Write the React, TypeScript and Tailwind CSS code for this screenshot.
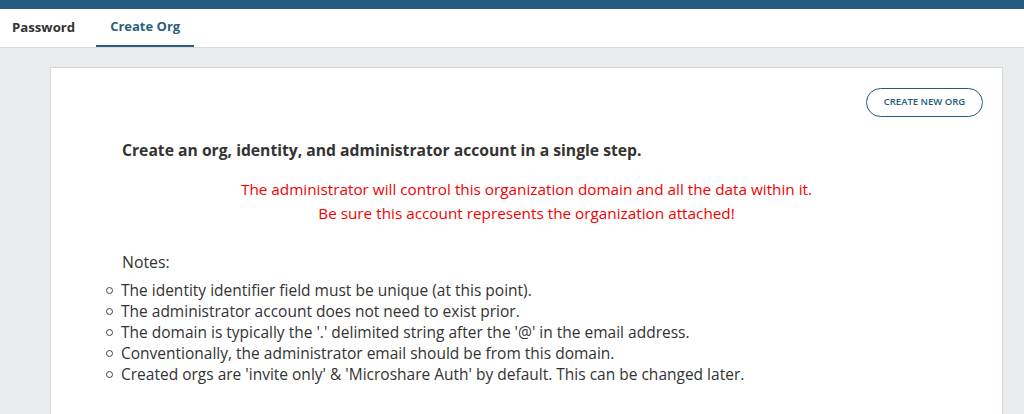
import React from 'react';

const notes = [
    "The identity identifier field must be unique (at this point).",
    "The administrator account does not need to exist prior.",
    "The domain is typically the '.' delimited string after the '@' in the email address.",
    "Conventionally, the administrator email should be from this domain.",
    "Created orgs are 'invite only' & 'Microshare Auth' by default. This can be changed later.",
];

const App = () => {
    return (
        <div className="h-[414px] w-full bg-[#e9ecec] font-['Open_Sans',sans-serif] overflow-hidden">
            <div className="h-[9px] bg-[#245a7b]" />
            <div className="h-[39px] bg-white border-b border-[#d9dcdc] flex items-end">
                <div className="px-[12px] h-full flex items-center text-[13.2px] font-bold text-[#333]">Password</div>
                <div className="ml-[9px] w-[98px] h-full flex items-center justify-center text-[13px] font-bold text-[#2a5f80] border-b-2 border-[#2a5f80]">Create Org</div>
            </div>

            <div className="ml-[50px] mr-[21px] mt-[19px] bg-white border border-[#d7d9d9] pb-[40px]">
                <div className="flex justify-end pt-[20px] pr-[19px]">
                    <button className="w-[117px] h-[29px] rounded-full border border-[#245a7b] text-[9.5px] font-semibold text-[#245a7b]">CREATE NEW ORG</button>
                </div>

                <div className="pl-[71px] pr-[40px]">
                    <h2 className="mt-[23px] text-[15.7px] font-bold text-[#333] leading-[20px]">Create an org, identity, and administrator account in a single step.</h2>

                    <div className="mt-[17px] -ml-[71px] -mr-[40px] text-center text-[15.3px] text-[#f40000] leading-[24px]">
                        <p>The administrator will control this organization domain and all the data within it.</p>
                        <p>Be sure this account represents the organization attached!</p>
                    </div>

                    <p className="mt-[27px] text-[15.8px] text-[#333] leading-[20px]">Notes:</p>

                    <ul className="mt-[8px] text-[15.5px] text-[#333] leading-[21px]">
                        {notes.map((n) => (
                            <li key={n} className="flex items-center">
                                <span className="-ml-[16px] mr-[8px] w-[7px] h-[7px] rounded-full border border-[#444] shrink-0" />
                                <span>{n}</span>
                            </li>
                        ))}
                    </ul>
                </div>
            </div>
        </div>
    );
};

export default App;
